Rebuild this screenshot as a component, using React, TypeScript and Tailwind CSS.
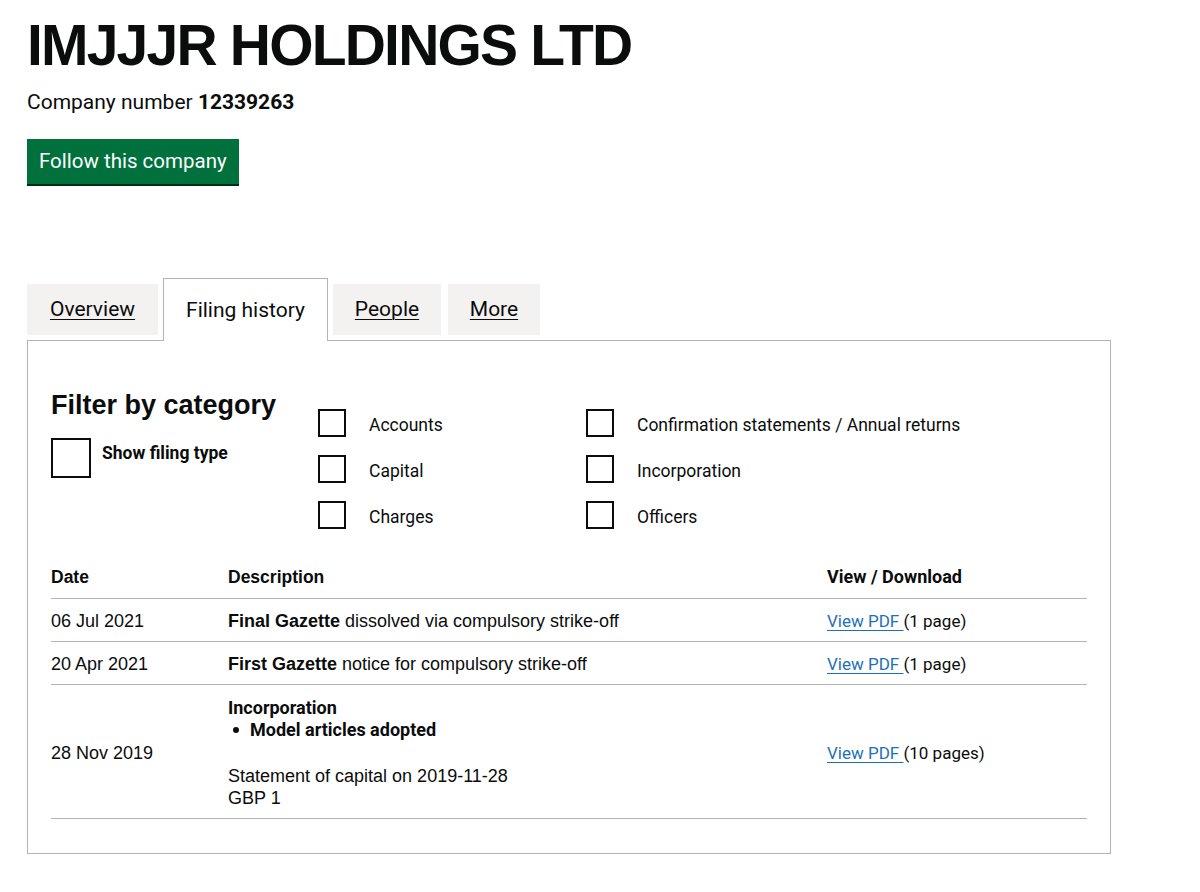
const arial = { fontFamily: '"Liberation Sans", Arial, sans-serif' };

function Checkbox({ label, big = false }: { label: string; big?: boolean }) {
  if (big) {
    return (
      <div className="flex items-start">
        <div className="w-[40px] h-[40px] border-2 border-[#0b0c0c] shrink-0" />
        <span className="ml-[11px] mt-[4px] text-[17.5px] leading-[22px] font-bold">{label}</span>
      </div>
    );
  }
  return (
    <div className="flex items-center">
      <div className="w-[28px] h-[28px] border-2 border-[#0b0c0c] shrink-0" />
      <span className="ml-[23px] mt-[3px] text-[17.5px] leading-[22px]">{label}</span>
    </div>
  );
}

function Tab({ label, active = false, width }: { label: string; active?: boolean; width: string }) {
  if (active) {
    return (
      <div
        className={`${width} h-[63px] flex items-center justify-center bg-white border border-[#b1b4b6] border-b-0 -mb-px relative z-10`}
      >
        <span className="text-[21px] pt-[1px]">{label}</span>
      </div>
    );
  }
  return (
    <div className={`${width} h-[51px] mt-[6px] flex items-center justify-center bg-[#f3f2f1]`}>
      <a className="text-[21px] underline underline-offset-[3px] decoration-1 cursor-pointer">{label}</a>
    </div>
  );
}

function PdfLink({ pages }: { pages: string }) {
  return (
    <span className="text-[17px]">
      <a className="text-[#1d70b8] underline underline-offset-[3px] decoration-1 cursor-pointer">View PDF </a>
      ({pages})
    </span>
  );
}

const cell = 'pt-[11px] pb-[9px] align-middle';
const head = 'pt-[13px] pb-[10px] leading-[22px] font-bold';

export default function App() {
  return (
    <div
      className="min-h-screen bg-white text-[#0b0c0c] pl-[27px]"
      style={{ fontFamily: 'Roboto, "Noto Sans", sans-serif' }}
    >
      <h1 className="pt-[17px] text-[57px] leading-none font-bold tracking-[-1.8px]" style={arial}>
        IMJJJR HOLDINGS LTD
      </h1>

      <p className="mt-[16px] text-[21px] leading-[24px]">
        Company number <strong className="font-bold">12339263</strong>
      </p>

      <button className="mt-[25px] h-[45px] px-[12px] bg-[#00703c] text-white text-[20.5px] shadow-[0_2px_0_#002d18] flex items-center">
        Follow this company
      </button>

      <div className="mt-[94px] w-[1084px]">
        <div className="flex gap-[5px] items-start">
          <Tab label="Overview" width="w-[131px]" />
          <Tab label="Filing history" active width="w-[165px]" />
          <Tab label="People" width="w-[108px]" />
          <div className="ml-[2px]">
            <Tab label="More" width="w-[92px]" />
          </div>
        </div>

        <div className="border border-[#b1b4b6] px-[23px] pt-[48px] pb-[34px]">
          <div className="flex items-start">
            <div className="w-[267px]">
              <h2 className="text-[27px] leading-[32px] font-bold" style={arial}>
                Filter by category
              </h2>
              <div className="mt-[17px]">
                <Checkbox label="Show filing type" big />
              </div>
            </div>
            <div className="w-[268px] pt-[20px] flex flex-col gap-[18px]">
              <Checkbox label="Accounts" />
              <Checkbox label="Capital" />
              <Checkbox label="Charges" />
            </div>
            <div className="flex-1 pt-[20px] flex flex-col gap-[18px]">
              <Checkbox label="Confirmation statements / Annual returns" />
              <Checkbox label="Incorporation" />
              <Checkbox label="Officers" />
            </div>
          </div>

          <table className="mt-[24px] w-full border-collapse text-left">
            <thead>
              <tr className="border-b border-[#b1b4b6]">
                <th className={`w-[177px] text-[17.5px] ${head}`} style={arial}>
                  Date
                </th>
                <th className={`w-[599px] text-[17.5px] ${head}`} style={arial}>
                  Description
                </th>
                <th className={`text-[18px] ${head}`}>View / Download</th>
              </tr>
            </thead>
            <tbody className="text-[18px] leading-[22px]">
              <tr className="border-b border-[#b1b4b6]">
                <td className={cell} style={arial}>06 Jul 2021</td>
                <td className={cell} style={arial}>
                  <strong>Final Gazette</strong> dissolved via compulsory strike-off
                </td>
                <td className={cell}>
                  <PdfLink pages="1 page" />
                </td>
              </tr>
              <tr className="border-b border-[#b1b4b6]">
                <td className={cell} style={arial}>20 Apr 2021</td>
                <td className={cell} style={arial}>
                  <strong>First Gazette</strong> notice for compulsory strike-off
                </td>
                <td className={cell}>
                  <PdfLink pages="1 page" />
                </td>
              </tr>
              <tr className="border-b border-[#b1b4b6]">
                <td className={cell} style={arial}>28 Nov 2019</td>
                <td className="pt-[12px] pb-[9px]">
                  <div className="font-bold">Incorporation</div>
                  <ul className="font-bold">
                    <li className="flex items-center">
                      <span className="w-[22px] pl-[5px] flex">
                        <span className="w-[6px] h-[6px] rounded-full bg-[#0b0c0c]" />
                      </span>
                      <span>Model articles adopted</span>
                    </li>
                  </ul>
                  <div className="mt-[24px]" style={arial}>
                    Statement of capital on 2019-11-28
                  </div>
                  <div style={arial}>GBP 1</div>
                </td>
                <td className={cell}>
                  <PdfLink pages="10 pages" />
                </td>
              </tr>
            </tbody>
          </table>
        </div>
      </div>
    </div>
  );
}
